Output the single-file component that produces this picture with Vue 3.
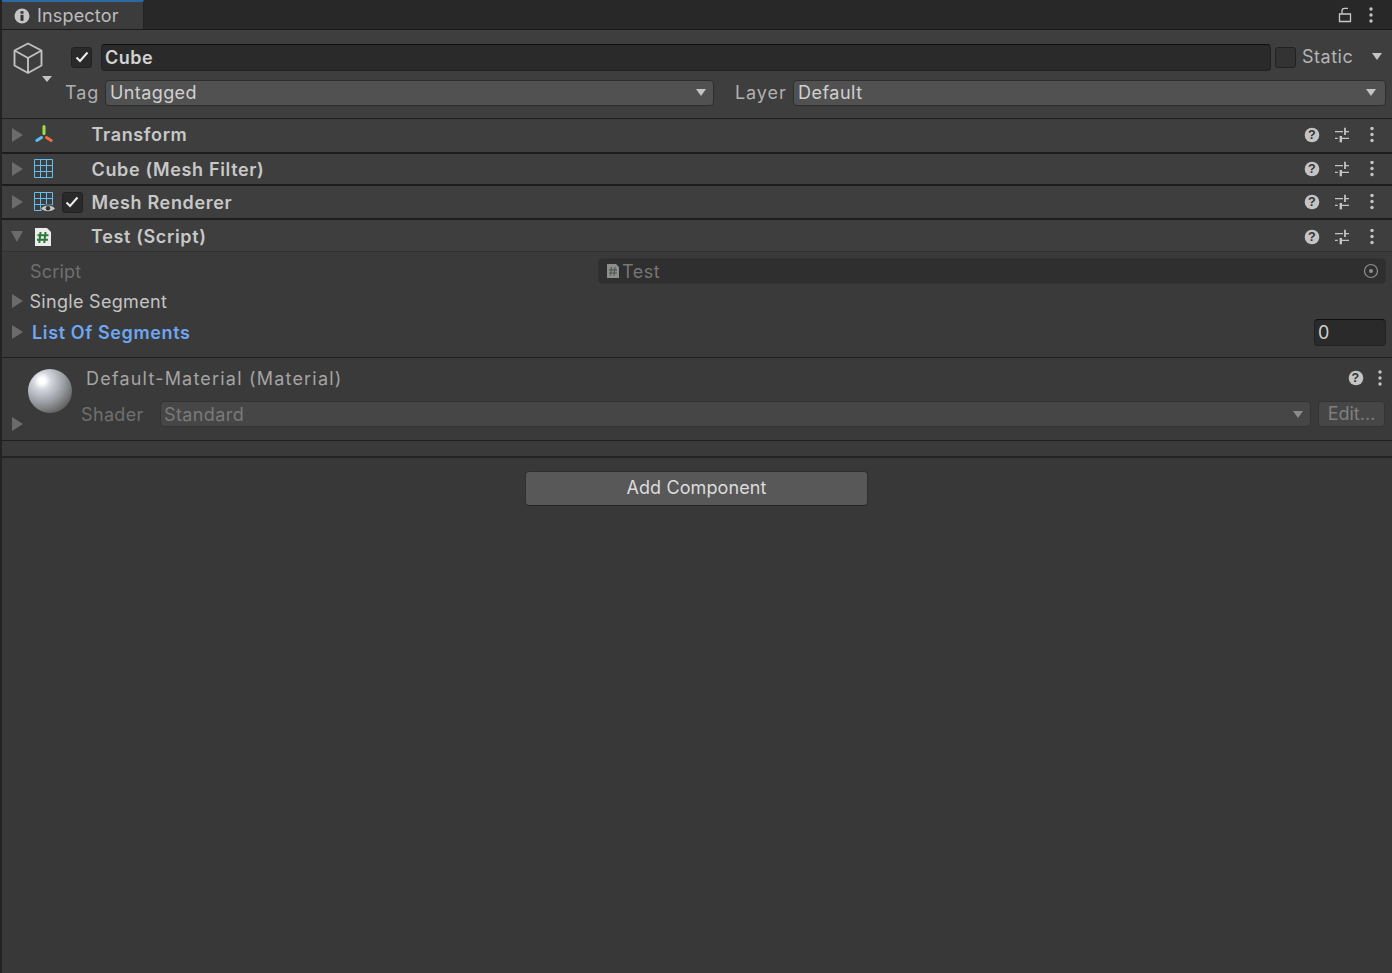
<script setup>
const comps = [
  { name: 'Transform', icon: 'transform', h: 35, line: 2, pt: 0, pb: 2 },
  { name: 'Cube (Mesh Filter)', icon: 'grid', h: 32, line: 2, pt: 0, pb: 0 },
  { name: 'Mesh Renderer', icon: 'renderer', h: 34, line: 2, pt: 0, pb: 0, check: true },
  { name: 'Test (Script)', icon: 'script', h: 32, line: 1, pt: 2, pb: 0, open: true }
]
const rowStyle = (c) => ({ height: c.h + 'px', paddingTop: c.pt + 'px', paddingBottom: c.pb + 'px' })
</script>

<template>
  <div class="window">
    <div class="tabbar">
      <div class="tab">
        <svg width="16" height="16" viewBox="0 0 16 16"><circle cx="8" cy="8" r="7.500" fill="#c4c4c4"/><rect x="6.500" y="6.800" width="3" height="6" fill="#333"/><rect x="6.500" y="3.200" width="3" height="2.500" fill="#333"/></svg>
        <span>Inspector</span>
      </div>
      <div class="spacer"></div>
      <svg class="lock" width="14" height="16" viewBox="0 0 14 16"><path d="M1.500 7h11v7.500h-11zM4 7V3.800C4 2.200 5 1.300 6.500 1.300H10" fill="none" stroke="#c8c8c8" stroke-width="1.300"/></svg>
      <svg class="kebab top" width="6" height="16" viewBox="0 0 6 16"><circle cx="3" cy="2" r="1.700"/><circle cx="3" cy="8" r="1.700"/><circle cx="3" cy="14" r="1.700"/></svg>
    </div>

    <div class="go-header">
      <div class="go-row1">
        <svg class="cube" width="32" height="34" viewBox="0 0 32 34"><path d="M15 1.500 28.500 8.500v15L15 31 1.500 23.500v-15zM1.500 8.500 15 16l13.500-7.500M15 16v15" fill="none" stroke="#c0c0c0" stroke-width="1.900" stroke-linejoin="round"/></svg>
        <span class="tri-down small cube-drop"></span>
        <label class="check go-check"><svg width="14" height="12" viewBox="0 0 14 12"><path d="M1.500 6.500 5 10l7.500-8.500" fill="none" stroke="#eee" stroke-width="2"/></svg></label>
        <div class="name-field">Cube</div>
        <label class="check static-check"></label>
        <span class="static-label">Static</span>
        <span class="tri-down static-drop"></span>
      </div>
      <div class="go-row2">
        <span class="label tag-label">Tag</span>
        <div class="dropdown tag-drop"><span>Untagged</span><span class="tri-down"></span></div>
        <span class="label layer-label">Layer</span>
        <div class="dropdown layer-drop"><span>Default</span><span class="tri-down"></span></div>
      </div>
    </div>

    <div v-for="c in comps" :key="c.name" class="comp" :class="{ thick: c.line === 2 }" :style="rowStyle(c)">
      <span :class="c.open ? 'fold-open' : 'fold'"></span>
      <div class="comp-icon">
        <svg v-if="c.icon === 'transform'" width="20" height="20" viewBox="0 0 20 20"><path d="M10 1.500v7" stroke="#9ee04a" stroke-width="3" stroke-linecap="round"/><path d="M7.500 12.500 2.800 15.500" stroke="#5fbff0" stroke-width="3" stroke-linecap="round"/><path d="M12.500 12.500l4.700 3" stroke="#f0703c" stroke-width="3" stroke-linecap="round"/></svg>
        <svg v-else-if="c.icon === 'grid'" width="20" height="20" viewBox="0 0 20 20"><path d="M.5.500h18v18H.5zM6.500.500v18M12.500.500v18M.5 6.500h18M.5 12.500h18" fill="none" stroke="#62c0f0" stroke-width="1"/></svg>
        <svg v-else-if="c.icon === 'renderer'" class="renderer" width="22" height="22" viewBox="0 0 22 22"><path d="M.5.500h18v18H.5zM6.500.500v18M12.500.500v18M.5 6.500h18M.5 12.500h18" fill="none" stroke="#62c0f0" stroke-width="1"/><ellipse cx="14" cy="16.500" rx="7.500" ry="4.200" fill="#3e3e3e"/><path d="M7 16.500c3-4 11-4 14 0-3 3.600-11 3.600-14 0z" fill="#c4c4c4"/><circle cx="14" cy="16.200" r="2.200" fill="#333"/></svg>
        <svg v-else width="20" height="20" viewBox="0 0 20 20"><path d="M2 1h12l4 4v14H2z" fill="#ececec"/><path d="M7.500 5 6.300 16M12.500 5l-1.200 11M4.500 8.300h11M4 12.800h11" stroke="#2c7a35" stroke-width="2" fill="none"/></svg>
      </div>
      <div class="check-slot">
        <label v-if="c.check" class="check"><svg width="14" height="12" viewBox="0 0 14 12"><path d="M1.500 6.500 5 10l7.500-8.500" fill="none" stroke="#eee" stroke-width="2"/></svg></label>
      </div>
      <span class="comp-name">{{ c.name }}</span>
      <div class="spacer"></div>
      <svg class="help" width="16" height="16" viewBox="0 0 16 16"><circle cx="8" cy="8" r="7.300" fill="#c4c4c4"/><text x="8" y="12.200" text-anchor="middle" class="q">?</text></svg>
      <svg class="sliders" width="16" height="16" viewBox="0 0 16 16"><path d="M1 4.700h8M11 4.700h4M1 11.300h2.700M7 11.300h8" fill="none" stroke="#c4c4c4" stroke-width="1.300"/><path d="M11 .7v7.300" stroke="#c4c4c4" stroke-width="1.800"/><path d="M6.800 9v6.300" stroke="#c4c4c4" stroke-width="2.400"/></svg>
      <svg class="kebab" width="6" height="16" viewBox="0 0 6 16"><circle cx="3" cy="1.500" r="1.700"/><circle cx="3" cy="7.500" r="1.700"/><circle cx="3" cy="13.500" r="1.700"/></svg>
    </div>

    <div class="script-body">
      <div class="prop script-prop">
        <span class="prop-label dim">Script</span>
        <div class="object-field">
          <svg width="14" height="14" viewBox="0 0 14 14"><path d="M1 0h9l3 3v11H1z" fill="#8d8d8d"/><path d="M5.500 3 4.500 11.500M9 3l-1 8.500M3 5.800h8M3 9h8" stroke="#4d5a4d" stroke-width="1.200" fill="none"/></svg>
          <span>Test</span>
          <div class="spacer"></div>
          <svg width="16" height="16" viewBox="0 0 16 16"><circle cx="8" cy="8" r="6.500" fill="none" stroke="#8f8f8f" stroke-width="1.200"/><circle cx="8" cy="8" r="2" fill="#8f8f8f"/></svg>
        </div>
      </div>
      <div class="prop single-prop">
        <span class="fold"></span>
        <span class="prop-label single-label">Single Segment</span>
      </div>
      <div class="prop list-prop">
        <span class="fold"></span>
        <span class="prop-label modified">List Of Segments</span>
        <div class="spacer"></div>
        <div class="count">0</div>
      </div>
    </div>

    <div class="material">
      <div class="mat-left">
        <div class="sphere"></div>
        <span class="fold mat-fold"></span>
      </div>
      <div class="mat-main">
        <div class="mat-title">
          <span>Default-Material (Material)</span>
          <div class="spacer"></div>
          <svg class="help" width="16" height="16" viewBox="0 0 16 16"><circle cx="8" cy="8" r="7.300" fill="#c4c4c4"/><text x="8" y="12.200" text-anchor="middle" class="q">?</text></svg>
          <svg class="kebab" width="6" height="16" viewBox="0 0 6 16"><circle cx="3" cy="2" r="1.700"/><circle cx="3" cy="8" r="1.700"/><circle cx="3" cy="14" r="1.700"/></svg>
        </div>
        <div class="shader-row">
          <span class="shader-label">Shader</span>
          <div class="shader-drop"><span>Standard</span><span class="tri-down"></span></div>
          <div class="edit-btn">Edit...</div>
        </div>
      </div>
    </div>

    <div class="gap-strip"></div>

    <div class="bottom">
      <button class="add-btn">Add Component</button>
    </div>
  </div>
</template>

<style>
html, body { margin: 0; background: #383838; }
</style>

<style scoped>
.window {
  width: 1392px;
  height: 973px;
  box-sizing: border-box;
  border-left: 2px solid #232323;
  background: #383838;
  font-family: Inter, "Noto Sans", sans-serif;
  font-size: 18px;
  letter-spacing: 0.4px;
  color: #c4c4c4;
  overflow: hidden;
}
.spacer { flex: 1; }
.tabbar {
  height: 29px;
  background: #282828;
  display: flex;
  align-items: center;
  border-bottom: 1px solid #1a1a1a;
  margin-left: -2px;
}
.tab {
  box-sizing: border-box;
  margin-left: 2px;
  width: 142px;
  height: 29px;
  background: #3c3c3c;
  border-top: 2px solid #2c6aa5;
  border-right: 1px solid #232323;
  display: flex;
  align-items: center;
  padding-left: 12px;
  gap: 7px;
  color: #bdbdbd;
  letter-spacing: 0.17px;
}
.lock { margin-right: 16px; }
.kebab { fill: #c4c4c4; }
.kebab.top { margin-right: 18px; }
.go-header {
  box-sizing: border-box;
  height: 89px;
  background: #3e3e3e;
  border-bottom: 1px solid #1e1e1e;
  position: relative;
}
.go-row1 {
  height: 44px;
  display: flex;
  align-items: center;
  padding-top: 10px;
  box-sizing: border-box;
}
.cube { margin-left: 11px; margin-top: 3px; }
.cube-drop { position: absolute; left: 40px; top: 46px; }
.check {
  box-sizing: border-box;
  width: 21px;
  height: 21px;
  background: #2a2a2a;
  border: 1px solid #212121;
  border-radius: 3px;
  display: flex;
  align-items: center;
  justify-content: center;
}
.go-check { margin-left: 26px; }
.name-field {
  box-sizing: border-box;
  margin-left: 9px;
  width: 1170px;
  height: 27px;
  background: #2a2a2a;
  border: 1px solid #212121;
  border-top-color: #0f0f0f;
  border-radius: 4px;
  padding-left: 3px;
  line-height: 26px;
  font-weight: 600;
  letter-spacing: 0.5px;
  color: #d2d2d2;
}
.static-check { margin-left: 4px; background: #333; }
.static-label { margin-left: 6px; padding-bottom: 2px; color: #b4b4b4; letter-spacing: 0.5px; }
.static-drop { margin-left: 19px; margin-bottom: 2px; }
.tri-down {
  display: inline-block;
  width: 0;
  height: 0;
  border-left: 5.500px solid transparent;
  border-right: 5.500px solid transparent;
  border-top: 7px solid #c4c4c4;
}
.tri-down.small { border-left-width: 5px; border-right-width: 5px; border-top-width: 6px; }
.go-row2 {
  display: flex;
  align-items: center;
  height: 26px;
  margin-top: 6px;
}
.label { color: #b0b0b0; letter-spacing: 0.9px; padding-bottom: 2px; }
.tag-label { margin-left: 63px; width: 40px; }
.dropdown {
  box-sizing: border-box;
  height: 26px;
  background: #515151;
  border: 1px solid #2d2d2d;
  border-radius: 4px;
  display: flex;
  align-items: center;
  justify-content: space-between;
  padding: 0 7px 2px 4px;
  color: #d0d0d0;
}
.tag-drop { width: 609px; }
.layer-label { margin-left: 21px; width: 58px; }
.layer-drop { width: 593px; padding-right: 9px; letter-spacing: 0.5px; }
.comp {
  box-sizing: border-box;
  display: flex;
  align-items: center;
  background: #3e3e3e;
  border-bottom: 1px solid #303030;
}
.comp.thick { border-bottom: 2px solid #1c1c1c; }
.fold, .fold-open { display: inline-block; width: 0; height: 0; flex: none; }
.fold {
  border-top: 7px solid transparent;
  border-bottom: 7px solid transparent;
  border-left: 11.500px solid #6b6b6b;
  margin-left: 10px;
}
.fold-open {
  border-left: 6.500px solid transparent;
  border-right: 6.500px solid transparent;
  border-top: 11.500px solid #6b6b6b;
  margin-left: 9px;
  margin-right: -0.500px;
}
.comp-icon {
  display: flex;
  width: 28px;
  margin-left: 10.500px;
  flex: none;
}
.renderer { margin-top: 2px; }
.check-slot { width: 30px; flex: none; display: flex; }
.comp-name {
  font-weight: 600;
  letter-spacing: 0.65px;
  color: #c8c8c8;
}
.q { font: 700 12.500px "Liberation Sans", sans-serif; fill: #333; }
.sliders { margin-left: 14px; }
.comp .kebab { margin: 0 17px 0 19px; }
.script-body { height: 106px; box-sizing: border-box; background: #3a3a3a; border-bottom: 1px solid #1f1f1f; }
.prop { display: flex; align-items: center; box-sizing: border-box; }
.script-prop { height: 36px; padding-top: 2px; }
.single-prop { height: 26px; }
.list-prop { height: 36px; }
.prop-label { margin-left: 28px; }
.fold + .prop-label { margin-left: 6.500px; }
.dim { color: #6f6f6f; width: 568px; letter-spacing: 0.2px; flex: none; }
.single-label { letter-spacing: 0.3px; }
.modified { font-weight: 600; color: #6ea6f2; letter-spacing: 0.62px; }
.fold + .modified { margin-left: 9px; }
.object-field {
  box-sizing: border-box;
  width: 788px;
  height: 26px;
  background: #2f2f2f;
  border-radius: 4px;
  border: 1px solid #333;
  display: flex;
  align-items: center;
  padding: 0 6px 0 7px;
  gap: 2px;
  color: #767676;
  letter-spacing: 0.5px;
}
.count {
  box-sizing: border-box;
  width: 72px;
  height: 27px;
  margin-right: 6px;
  background: #2a2a2a;
  border: 1px solid #212121;
  border-top-color: #0f0f0f;
  border-radius: 4px;
  padding-left: 3px;
  line-height: 26px;
  color: #d0d0d0;
}
.material {
  height: 83px;
  box-sizing: border-box;
  background: #3a3a3a;
  border-bottom: 1px solid #1f1f1f;
  display: flex;
}
.mat-left { width: 0; position: relative; }
.sphere {
  position: absolute;
  left: 26px;
  top: 11px;
  width: 44px;
  height: 44px;
  border-radius: 50%;
  background: radial-gradient(circle at 32% 27%, #ffffff 0 7%, #d3d6dc 20%, #9b9ea4 50%, #666 76%, #434343 100%);
}
.mat-fold { position: absolute; left: 0; top: 59px; }
.mat-main { flex: 1; }
.mat-title {
  display: flex;
  align-items: center;
  height: 40px;
  padding-left: 84px;
  color: #a4a4a4;
  letter-spacing: 1.2px;
}
.mat-title .kebab { margin: 0 9px 0 13px; }
.shader-row { display: flex; align-items: center; height: 26px; margin-top: 3px; }
.shader-label { margin-left: 79px; width: 79px; color: #6f6f6f; letter-spacing: 0.35px; }
.shader-drop {
  box-sizing: border-box;
  width: 1151px;
  height: 26px;
  background: #464646;
  border: 1px solid #333;
  border-radius: 4px;
  display: flex;
  align-items: center;
  justify-content: space-between;
  padding: 0 7px 0 3px;
  color: #7a7a7a;
}
.shader-drop .tri-down { border-top-color: #8b8b8b; }
.edit-btn {
  box-sizing: border-box;
  margin-left: 7px;
  width: 67px;
  height: 26px;
  background: #464646;
  border: 1px solid #333;
  border-radius: 4px;
  text-align: center;
  line-height: 24px;
  color: #7f7f7f;
  letter-spacing: 0;
}
.gap-strip { height: 17px; box-sizing: border-box; background: #3a3a3a; border-bottom: 2px solid #232323; }
.bottom { display: flex; justify-content: center; padding: 13px 1px 0 0; }
.add-btn {
  box-sizing: border-box;
  width: 343px;
  height: 35px;
  background: #585858;
  border: 1px solid #2f2f2f;
  border-bottom-color: #242424;
  border-radius: 4px;
  font: inherit;
  letter-spacing: 0.1px;
  color: #dcdcdc;
  padding: 0 0 2px;
}
</style>
